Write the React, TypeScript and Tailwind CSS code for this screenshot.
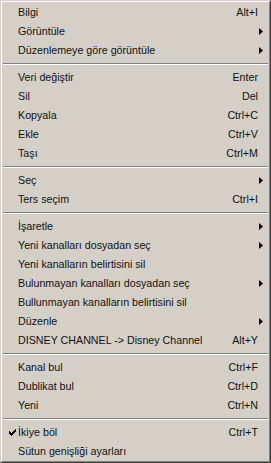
type Entry =
  | { sep: true }
  | { sep?: false; label: string; shortcut?: string; sub?: boolean; checked?: boolean };

const entries: Entry[] = [
  { label: "Bilgi", shortcut: "Alt+I" },
  { label: "Görüntüle", sub: true },
  { label: "Düzenlemeye göre görüntüle", sub: true },
  { sep: true },
  { label: "Veri değiştir", shortcut: "Enter" },
  { label: "Sil", shortcut: "Del" },
  { label: "Kopyala", shortcut: "Ctrl+C" },
  { label: "Ekle", shortcut: "Ctrl+V" },
  { label: "Taşı", shortcut: "Ctrl+M" },
  { sep: true },
  { label: "Seç", sub: true },
  { label: "Ters seçim", shortcut: "Ctrl+I" },
  { sep: true },
  { label: "İşaretle", sub: true },
  { label: "Yeni kanalları dosyadan seç", sub: true },
  { label: "Yeni kanalların belirtisini sil" },
  { label: "Bulunmayan kanalları dosyadan seç", sub: true },
  { label: "Bullunmayan kanalların belirtisini sil" },
  { label: "Düzenle", sub: true },
  { label: "DISNEY CHANNEL -> Disney Channel", shortcut: "Alt+Y" },
  { sep: true },
  { label: "Kanal bul", shortcut: "Ctrl+F" },
  { label: "Dublikat bul", shortcut: "Ctrl+D" },
  { label: "Yeni", shortcut: "Ctrl+N" },
  { sep: true },
  { label: "İkiye böl", shortcut: "Ctrl+T", checked: true },
  { label: "Sütun genişliği ayarları" },
];

function Arrow() {
  return (
    <svg width="4" height="7" viewBox="0 0 4 7" className="mr-[6px]">
      <path d="M0 0 L4 3.5 L0 7 Z" fill="#000" />
    </svg>
  );
}

function Check() {
  return (
    <svg width="7" height="7" viewBox="0 0 7 7">
      <path d="M0 2h1v1h1v1h1v-1h1v-1h1v-1h1v-1h1v3h-1v1h-1v1h-1v1h-1v1h-1v-1h-1v-1h-1v-1h-1z" fill="#000" />
    </svg>
  );
}

export default function App() {
  return (
    <div className="w-[271px] h-[463px] border border-t-[#d4d0c8] border-l-[#d4d0c8] border-r-[#404040] border-b-[#404040] bg-[#d4d0c8] font-['Liberation_Sans',Arial,sans-serif] text-[10.7px] text-[#111]">
      <div className="h-full border border-t-white border-l-white border-r-[#808080] border-b-[#808080] pt-[1px] flex flex-col">
        {entries.map((e, i) =>
          e.sep ? (
            <div key={i} className="h-[8px] flex items-center px-[1px]">
              <div className="w-full border-t border-t-[#808080] border-b border-b-white" />
            </div>
          ) : (
            <div key={i} className="h-[19px] flex items-center shrink-0">
              <div className="w-[16px] flex justify-end pr-[2px]">{e.checked && <Check />}</div>
              <span className="whitespace-nowrap">{e.label}</span>
              <div className="flex-1" />
              {e.shortcut && <span className="pr-[11px] whitespace-nowrap">{e.shortcut}</span>}
              {e.sub && <Arrow />}
            </div>
          )
        )}
      </div>
    </div>
  );
}
